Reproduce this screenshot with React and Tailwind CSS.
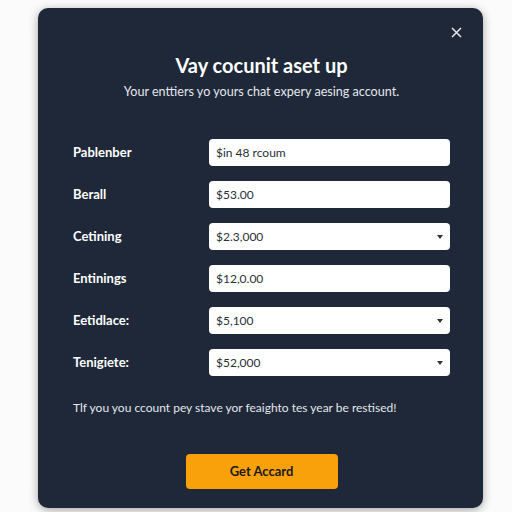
const rows = [
  { label: "Pablenber", value: "$in 48 rcoum", select: false },
  { label: "Berall", value: "$53.00", select: false },
  { label: "Cetining", value: "$2.3,000", select: true },
  { label: "Entinings", value: "$12,0.00", select: false },
  { label: "Eetidlace:", value: "$5,100", select: true },
  { label: "Tenigiete:", value: "$52,000", select: true },
];

function Field({ value, select }) {
  return (
    <div className="w-[241px] h-[27px] bg-white rounded-[4px] flex items-center justify-between pl-[7px] pr-[7px] text-[12px] text-[#2a2f38]">
      <span>{value}</span>
      {select && (
        <svg width="6" height="4" viewBox="0 0 6 4">
          <path d="M0 0 L6 0 L3 4 Z" fill="#333" />
        </svg>
      )}
    </div>
  );
}

export default function App() {
  return (
    <div className="w-[512px] h-[512px] bg-[#fbfbfb] overflow-hidden pt-[8px] pl-[38px]" style={{ fontFamily: 'Lato, "Open Sans", sans-serif' }}>
      <div className="relative w-[445px] h-[500px] bg-[#1e2838] rounded-[10px] shadow-[0_2px_10px_rgba(0,0,0,0.35)] pt-[45px] pl-[35px] pr-[33px]">
        <button className="absolute right-[21px] top-[19px] text-[#e6e9ee]">
          <svg width="11" height="11" viewBox="0 0 11 11">
            <path d="M1 1 L10 10 M10 1 L1 10" stroke="currentColor" strokeWidth="1.5" />
          </svg>
        </button>
        <h1 className="text-center text-white font-bold text-[20px] leading-[24px]">Vay cocunit aset up</h1>
        <p className="text-center text-[#e4e7ec] text-[12.6px] leading-[18px] mt-[6px]">Your enttiers yo yours chat expery aesing account.</p>
        <div className="mt-[38px] flex flex-col gap-[15px]">
          {rows.map((r) => (
            <div key={r.label} className="flex items-center justify-between">
              <span className="text-white font-bold text-[13px]">{r.label}</span>
              <Field value={r.value} select={r.select} />
            </div>
          ))}
        </div>
        <p className="mt-[23px] text-[#e4e7ec] text-[12px] leading-[18px]">Tlf you you ccount pey stave yor feaighto tes year be restised!</p>
        <div className="mt-[37px] flex justify-center">
          <button className="w-[152px] h-[35px] bg-[#f9a10a] rounded-[4px] text-[#1a1a1a] font-bold text-[13px]">Get Accard</button>
        </div>
      </div>
    </div>
  );
}
